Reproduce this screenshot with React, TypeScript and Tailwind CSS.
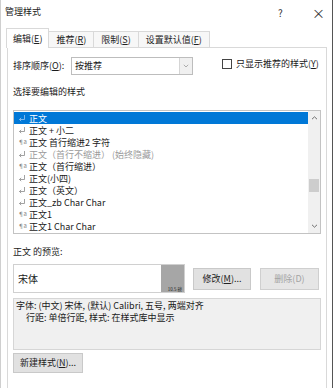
import React from "react";

const font = {
  fontFamily: '"Noto Sans CJK SC", "Noto Sans", sans-serif',
};

type Row = { text: string; icon: "ret" | "link"; muted?: boolean };

const rows: Row[] = [
  { text: "正文", icon: "ret" },
  { text: "正文 + 小二", icon: "ret" },
  { text: "正文 首行缩进2 字符", icon: "link" },
  { text: "正文（首行不缩进） (始终隐藏)", icon: "ret", muted: true },
  { text: "正文（首行缩进）", icon: "link" },
  { text: "正文(小四)", icon: "ret" },
  { text: "正文（英文）", icon: "ret" },
  { text: "正文_zb Char Char", icon: "ret" },
  { text: "正文1", icon: "link" },
  { text: "正文1 Char Char", icon: "link" },
];

const Key = ({ k }: { k: string }) => (
  <>
    (<span className="underline underline-offset-1">{k}</span>)
  </>
);

const RetIcon = ({ light }: { light?: boolean }) => (
  <svg width="8" height="8" viewBox="0 0 8 8" className="shrink-0">
    <path
      d="M6.5 1V5.5H1.5M3.2 3.8L1.5 5.5L3.2 7.2"
      fill="none"
      stroke={light ? "#9cc7ef" : "#8a8a8a"}
      strokeWidth="0.8"
    />
  </svg>
);

const LinkIcon = () => (
  <span className="shrink-0 w-[8px] text-[6px] leading-none text-[#8a8a8a] tracking-[-0.5px]">
    ¶a
  </span>
);

const StyleRow = ({ row, selected }: { row: Row; selected?: boolean }) => (
  <div
    className={`h-[12px] flex items-center gap-[3px] pl-[4px] text-[9px] leading-none whitespace-nowrap ${
      selected
        ? "bg-[#0078d7] text-white"
        : row.muted
        ? "text-[#9a9a9a]"
        : "text-[#1a1a1a]"
    }`}
  >
    {row.icon === "ret" ? <RetIcon light={selected} /> : <LinkIcon />}
    <span>{row.text}</span>
  </div>
);

const Tab = ({ children, active }: { children: React.ReactNode; active?: boolean }) => (
  <div
    className={`flex items-center justify-center border border-[#d9d9d9] text-[9px] text-[#222] ${
      active
        ? "h-[20px] bg-white border-b-0 -mb-px relative z-10 px-[6px]"
        : "h-[16px] bg-[#f7f7f7] border-b-0 -ml-px px-[7px]"
    }`}
  >
    {children}
  </div>
);

const Button = ({
  children,
  disabled,
  className,
}: {
  children: React.ReactNode;
  disabled?: boolean;
  className: string;
}) => (
  <div
    className={`flex items-center justify-center border text-[9px] ${
      disabled
        ? "bg-[#e6e6e6] border-[#cfcfcf] text-[#a3a3a3]"
        : "bg-[#e1e1e1] border-[#c9c9c9] text-[#222]"
    } ${className}`}
  >
    {children}
  </div>
);

export default function App() {
  return (
    <div
      style={font}
      className="w-[333px] h-[388px] bg-white overflow-hidden border-l border-[#cfcfcf] border-r-[#555] border-r text-[#1a1a1a]"
    >
      {/* title bar */}
      <div className="h-[22px] flex items-center pl-[4px] text-[9px] pt-[2px]">
        <span className="flex-1">管理样式</span>
        <span className="w-[34px] text-[10px] text-[#333]">?</span>
        <span className="w-[20px] text-[13px] leading-none text-[#333]">×</span>
      </div>

      {/* tabs */}
      <div className="mt-[6px] pl-[5px] flex items-end h-[19px]">
        <Tab active>
          编辑<Key k="E" />
        </Tab>
        <Tab>
          推荐<Key k="R" />
        </Tab>
        <Tab>
          限制<Key k="S" />
        </Tab>
        <Tab>
          设置默认值<Key k="F" />
        </Tab>
      </div>

      {/* panel */}
      <div className="ml-[6px] w-[320px] h-[400px] border border-[#d9d9d9] px-[5px] pt-[9px]">
        <div className="flex items-center h-[18px] text-[9px]">
          <span className="w-[58px]">
            排序顺序<Key k="O" />:
          </span>
          <div className="w-[122px] h-[18px] border border-[#bdbdbd] flex">
            <span className="flex-1 pl-[3px] flex items-center">按推荐</span>
            <span className="w-[13px] bg-[#f0f0f0] border-l border-[#d5d5d5] flex items-center justify-center">
              <svg width="6" height="4" viewBox="0 0 6 4">
                <path d="M0.8 0.8L3 3L5.2 0.8" fill="none" stroke="#9a9a9a" strokeWidth="0.8" />
              </svg>
            </span>
          </div>
          <div className="ml-[29px] w-[10px] h-[10px] border border-[#444] mb-[5px]" />
          <span className="ml-[4px] mb-[5px]">
            只显示推荐的样式<Key k="Y" />
          </span>
        </div>

        <div className="mt-[11px] text-[9px] leading-[12px]">选择要编辑的样式</div>

        {/* list */}
        <div className="mt-[12px] h-[124px] border border-[#c3c3c3] flex">
          <div className="flex-1 pt-[1px]">
            {rows.map((r, i) => (
              <StyleRow key={i} row={r} selected={i === 0} />
            ))}
          </div>
          <div className="w-[12px] bg-[#f0f0f0] flex flex-col items-center">
            <div className="h-[14px] flex items-center">
              <svg width="7" height="4" viewBox="0 0 7 4">
                <path d="M1 3.2L3.5 0.8L6 3.2" fill="none" stroke="#606060" strokeWidth="0.9" />
              </svg>
            </div>
            <div className="mt-[54px] w-[10px] h-[13px] bg-[#cdcdcd]" />
            <div className="flex-1" />
            <div className="h-[14px] flex items-center">
              <svg width="7" height="4" viewBox="0 0 7 4">
                <path d="M1 0.8L3.5 3.2L6 0.8" fill="none" stroke="#606060" strokeWidth="0.9" />
              </svg>
            </div>
          </div>
        </div>

        <div className="mt-[12px] text-[9px] leading-[12px]">正文 的预览:</div>

        {/* preview row */}
        <div className="mt-[6px] flex items-center">
          <div className="w-[172px] h-[29px] border border-[#d0d0d0] flex">
            <span className="flex-1 pl-[4px] flex items-center text-[10px]">宋体</span>
            <span className="w-[23px] bg-[#a6a6a6] flex items-end justify-end pr-[2px] pb-[1px] text-[4.5px] leading-none text-[#222]">
              10.5 磅
            </span>
          </div>
          <Button className="ml-[8px] w-[58px] h-[22px]">
            修改<Key k="M" />...
          </Button>
          <Button disabled className="ml-[9px] w-[59px] h-[22px]">
            删除(D)
          </Button>
        </div>

        {/* description */}
        <div className="mt-[5px] h-[52px] bg-[#f0f0f0] border border-[#d6d6d6] text-[9px] leading-[12px] pl-[2px] pt-[1px]">
          <div>字体: (中文) 宋体, (默认) Calibri, 五号, 两端对齐</div>
          <div className="pl-[10px]">行距: 单倍行距, 样式: 在样式库中显示</div>
        </div>

        <Button className="mt-[3px] w-[70px] h-[20px]">
          新建样式<Key k="N" />...
        </Button>
      </div>
    </div>
  );
}
